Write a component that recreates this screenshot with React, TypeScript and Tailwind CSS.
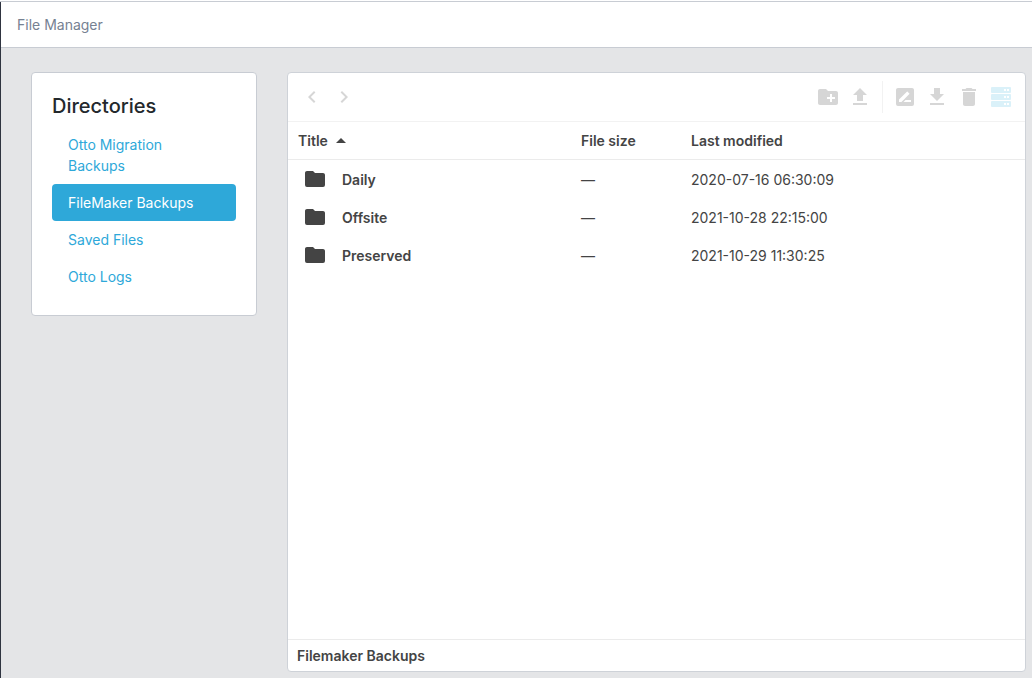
import { useState } from 'react';
import clsx from 'clsx';

const directories = ['Otto Migration Backups', 'FileMaker Backups', 'Saved Files', 'Otto Logs'];

const files = [
  { name: 'Daily', size: '—', modified: '2020-07-16 06:30:09' },
  { name: 'Offsite', size: '—', modified: '2021-10-28 22:15:00' },
  { name: 'Preserved', size: '—', modified: '2021-10-29 11:30:25' },
];

const icons = {
  back: 'M15.41 7.41 14 6l-6 6 6 6 1.41-1.41L10.83 12z',
  forward: 'M10 6 8.59 7.41 13.17 12l-4.58 4.59L10 18l6-6z',
  folder: 'M10 4H4C2.89 4 2 4.89 2 6V18A2 2 0 0 0 4 20H20A2 2 0 0 0 22 18V8C22 6.89 21.1 6 20 6H12L10 4Z',
  newFolder:
    'M20 6h-8l-2-2H4c-1.11 0-1.99.89-1.99 2L2 18c0 1.11.89 2 2 2h16c1.11 0 2-.89 2-2V8c0-1.11-.89-2-2-2zm-1 8h-3v3h-2v-3h-3v-2h3V9h2v3h3v2z',
  upload: 'M9 16h6v-6h4l-7-7-7 7h4zM5 18h14v2H5z',
  rename:
    'M18 17H10.5L12.5 15H18M6 17V14.5L13.88 6.65C14.07 6.45 14.39 6.45 14.59 6.65L16.35 8.41C16.55 8.61 16.55 8.92 16.35 9.12L8.47 17M19 3H5C3.89 3 3 3.89 3 5V19A2 2 0 0 0 5 21H19A2 2 0 0 0 21 19V5C21 3.89 20.1 3 19 3Z',
  download: 'M19 9h-4V3H9v6H5l7 7 7-7zM5 18v2h14v-2H5z',
  trash: 'M6 19c0 1.1.9 2 2 2h8c1.1 0 2-.9 2-2V7H6v12zM19 4h-3.5l-1-1h-5l-1 1H5v2h14V4z',
  server:
    'M3 2h18a1 1 0 0 1 1 1v4a1 1 0 0 1-1 1H3a1 1 0 0 1-1-1V3a1 1 0 0 1 1-1zM15 4v2h2V4zM18 4v2h2V4zM3 9h18a1 1 0 0 1 1 1v4a1 1 0 0 1-1 1H3a1 1 0 0 1-1-1v-4a1 1 0 0 1 1-1zM15 11v2h2v-2zM18 11v2h2v-2zM3 16h18a1 1 0 0 1 1 1v4a1 1 0 0 1-1 1H3a1 1 0 0 1-1-1v-4a1 1 0 0 1 1-1zM15 18v2h2v-2zM18 18v2h2v-2z',
};

function Icon({ name }: { name: keyof typeof icons }) {
  return (
    <svg viewBox="0 0 24 24" fill="currentColor" fillRule="evenodd" className="w-6 h-6" aria-hidden="true">
      <path d={icons[name]} />
    </svg>
  );
}

function ToolButton({ icon, label, className }: { icon: keyof typeof icons; label: string; className?: string }) {
  return (
    <button type="button" aria-label={label} className={clsx('w-8 h-8 flex items-center justify-center', className)}>
      <Icon name={icon} />
    </button>
  );
}

export default function App() {
  const [active, setActive] = useState('FileMaker Backups');

  return (
    <div className="min-h-screen flex flex-col bg-white pt-px font-['Inter',sans-serif] text-sm text-[#444444]">
      <div className="flex-1 flex flex-col border-t border-[#c8ccd3] bg-[#e4e5e7]">
        <div className="flex-1 flex flex-col border-l border-[#2f3440]">
          {/* Header */}
          <header className="h-[46px] flex items-center px-4 bg-white border-b border-[#c8ccd3] text-[#768192]">
            File Manager
          </header>

          <div className="flex-1 flex items-stretch gap-[30px] pt-6 pb-1.5 pl-[30px] pr-1.5">
            {/* Directories */}
            <aside className="w-[226px] shrink-0 self-start p-5 bg-white border border-[#c8ccd3] rounded">
              <h2 className="mb-2 pt-px text-xl leading-6 font-medium text-[#23282c]">Directories</h2>
              <nav>
                {directories.map((dir) => (
                  <a
                    key={dir}
                    href="#"
                    onClick={() => setActive(dir)}
                    className={clsx(
                      'block px-4 py-2 rounded leading-[21px]',
                      dir === active ? 'bg-[#2ea8d9] text-white' : 'text-[#2ea8d9]',
                    )}
                  >
                    {dir}
                  </a>
                ))}
              </nav>
            </aside>

            {/* Files */}
            <main className="flex-1 min-w-0 flex flex-col bg-white border border-[#ced2d8] rounded">
              <div className="h-[49px] flex items-center px-2 border-b border-[#f2f2f2] text-[#d6d6d6]">
                <ToolButton icon="back" label="Back" />
                <ToolButton icon="forward" label="Forward" />
                <div className="flex-1" />
                <ToolButton icon="newFolder" label="New folder" />
                <ToolButton icon="upload" label="Upload" />
                <div className="w-px h-8 mx-1.5 bg-[#f2f2f2]" />
                <ToolButton icon="rename" label="Rename" />
                <ToolButton icon="download" label="Download" />
                <ToolButton icon="trash" label="Delete" />
                <ToolButton icon="server" label="Server" className="text-[#daf1f9]" />
              </div>

              <table className="w-full table-fixed text-left">
                <thead>
                  <tr className="h-[37px] border-b border-[#ebebeb]">
                    <th className="w-[283px] px-2.5 pt-px font-semibold">
                      <button type="button" className="flex items-center gap-2">
                        Title
                        <svg viewBox="0 0 10 5" fill="currentColor" className="w-2.5 h-[5px]" aria-hidden="true">
                          <path d="M0 5 5 0l5 5z" />
                        </svg>
                      </button>
                    </th>
                    <th className="w-[110px] px-2.5 pt-px font-semibold">File size</th>
                    <th className="px-2.5 pt-px font-semibold">Last modified</th>
                  </tr>
                </thead>
                <tbody>
                  {files.map((file) => (
                    <tr key={file.name} className="h-[38px]">
                      <td className="px-[15px] pt-0.5 font-semibold">
                        <div className="flex items-center gap-[15px]">
                          <Icon name="folder" />
                          <span className="pt-0.5">{file.name}</span>
                        </div>
                      </td>
                      <td className="px-2.5 pt-1">{file.size}</td>
                      <td className="px-2.5 pt-1">{file.modified}</td>
                    </tr>
                  ))}
                </tbody>
              </table>

              <footer className="mt-auto h-8 flex items-center px-[9px] border-t border-[#ebebeb] font-semibold">
                Filemaker Backups
              </footer>
            </main>
          </div>
        </div>
      </div>
    </div>
  );
}
